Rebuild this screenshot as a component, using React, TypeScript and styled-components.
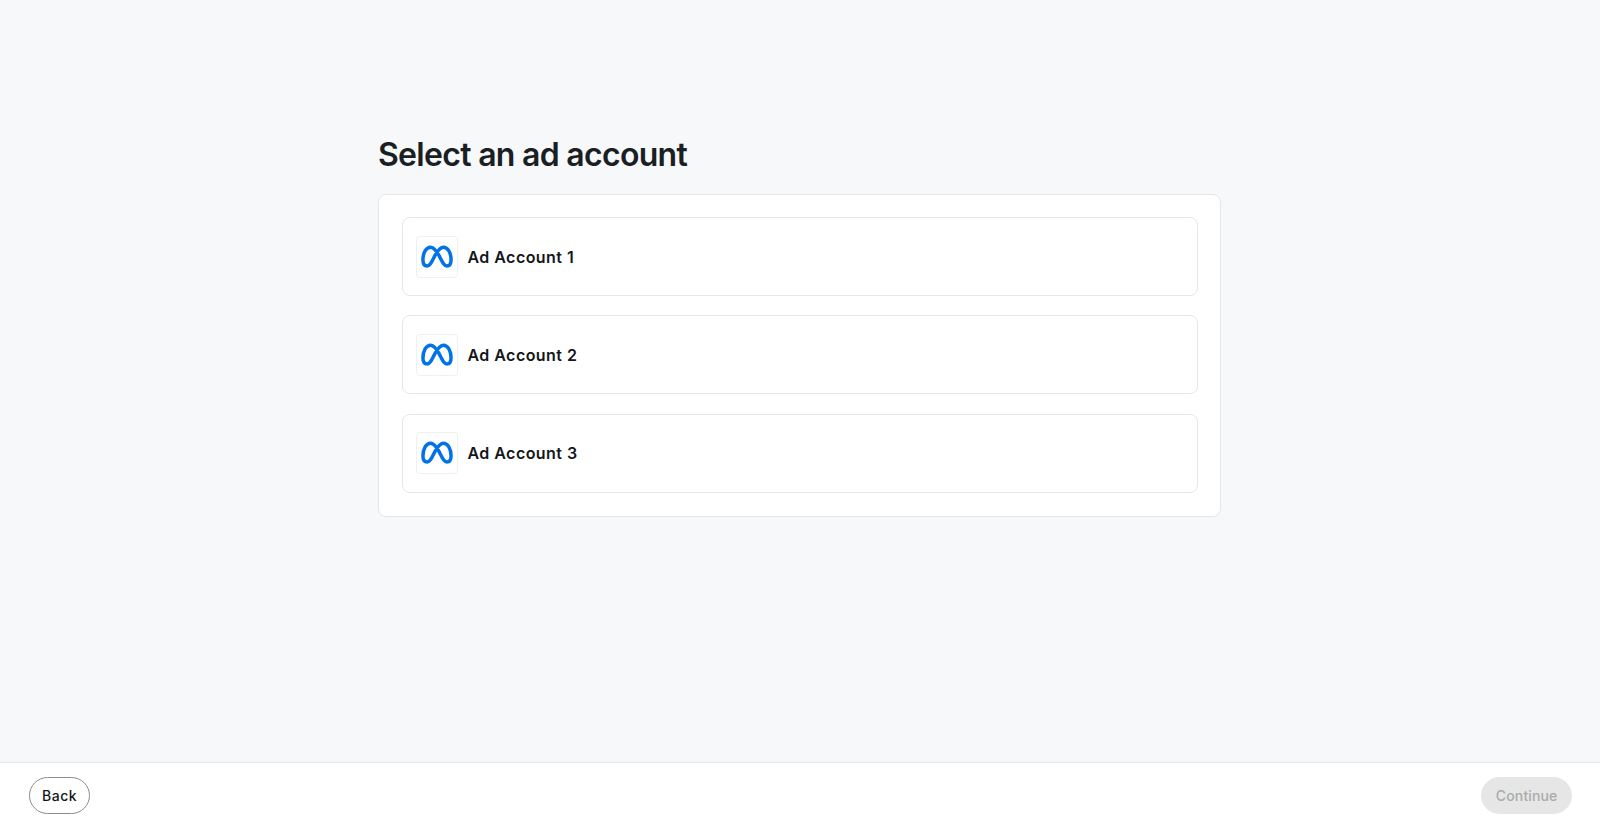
import React from 'react';
import styled, { createGlobalStyle } from 'styled-components';

const GlobalStyle = createGlobalStyle`
  html, body {
    margin: 0;
    padding: 0;
    height: 100%;
    background-color: #f7f8fa;
    font-family: 'Inter', 'Liberation Sans', sans-serif;
  }
  * {
    box-sizing: border-box;
  }
`;

const Page = styled.div`
  height: 828px;
  display: flex;
  flex-direction: column;
`;

const Main = styled.main`
  flex: 1;
  display: flex;
  justify-content: center;
  padding: 134px 1px 0 0;
`;

const Content = styled.div`
  width: 843px;
`;

const Title = styled.h1`
  margin: 0 0 19px;
  font-size: 32px;
  line-height: 41px;
  font-weight: 600;
  letter-spacing: -0.7px;
  color: #1a1f23;
`;

const Panel = styled.div`
  display: flex;
  flex-direction: column;
  gap: 19.25px;
  padding: 22px 22px 23px 23px;
  background-color: #fff;
  border: 1px solid #e4e6e9;
  border-radius: 8px;
`;

const AccountRow = styled.div`
  height: 79px;
  display: flex;
  align-items: center;
  gap: 9.5px;
  padding: 0 13px;
  background-color: #fff;
  border: 1px solid #e4e6e9;
  border-radius: 8px;
`;

const LogoBox = styled.div`
  width: 42px;
  height: 42px;
  display: flex;
  align-items: center;
  justify-content: center;
  border: 1px solid #eef0f2;
  border-radius: 4px;
`;

const AccountName = styled.span`
  font-size: 16px;
  font-weight: 600;
  letter-spacing: 0.45px;
  line-height: 20px;
  color: #14171a;
`;

const Footer = styled.footer`
  height: 66px;
  display: flex;
  align-items: center;
  justify-content: space-between;
  padding: 0 28px 0 29px;
  background-color: #fff;
  border-top: 1px solid #e3e5e8;
`;

const Button = styled.button<{ $disabled?: boolean }>`
  height: 37px;
  padding: 0 ${(props) => (props.$disabled ? '14.5px' : '12px')};
  border-radius: 19px;
  font-family: inherit;
  font-size: 14px;
  font-weight: 500;
  letter-spacing: ${(props) => (props.$disabled ? '0.15px' : '0.5px')};
  color: ${(props) => (props.$disabled ? '#a9abad' : '#14171a')};
  background-color: ${(props) => (props.$disabled ? '#e6e6e6' : '#fff')};
  border: ${(props) => (props.$disabled ? 'none' : '1px solid #8a8c8e')};
`;

function MetaLogo() {
  return (
    <svg width="32" height="23.3" viewBox="0 0 33 24" fill="none">
      <path
        d="M2 15.4C2 8 5.4 2.2 9.8 2.2C13.4 2.2 15.6 5.4 18.4 10.4C21.6 16.4 23.4 21.6 26.6 21.6C29.6 21.6 31 19.2 31 15.4C31 8 27.6 2.2 23.2 2.2C19.6 2.2 17.4 5.4 14.6 10.4C11.4 16.4 9.6 21.6 6.4 21.6C3.4 21.6 2 19.2 2 15.4Z"
        stroke="#0272e8"
        strokeWidth="3.6"
        strokeLinejoin="round"
      />
    </svg>
  );
}

const accounts = ['Ad Account 1', 'Ad Account 2', 'Ad Account 3'];

export default function App() {
  return (
    <Page>
      <GlobalStyle />
      <Main>
        <Content>
          <Title>Select an ad account</Title>
          <Panel>
            {accounts.map((name) => (
              <AccountRow key={name}>
                <LogoBox>
                  <MetaLogo />
                </LogoBox>
                <AccountName>{name}</AccountName>
              </AccountRow>
            ))}
          </Panel>
        </Content>
      </Main>
      <Footer>
        <Button>Back</Button>
        <Button $disabled>Continue</Button>
      </Footer>
    </Page>
  );
}
